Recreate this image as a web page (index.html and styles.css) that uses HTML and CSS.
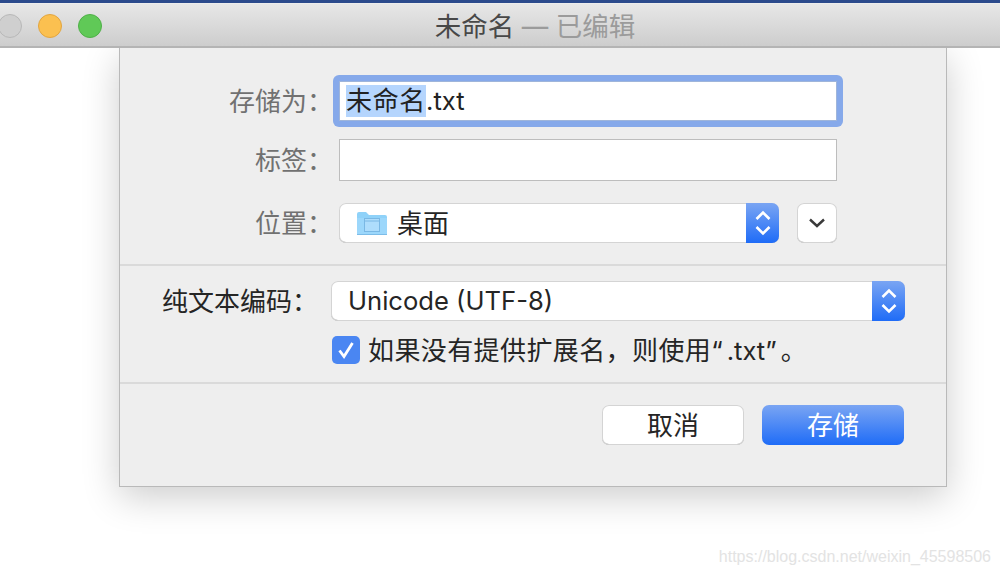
FILE: index.html
```html
<!DOCTYPE html>
<html lang="zh">
<head>
<meta charset="utf-8">
<title>未命名</title>
<link rel="stylesheet" href="styles.css">
</head>
<body>
<div class="accent"></div>
<header class="titlebar">
  <div class="lights">
    <span class="light light-gray"></span>
    <span class="light light-yellow"></span>
    <span class="light light-green"></span>
  </div>
  <div class="title">未命名 <span class="title-dim">— 已编辑</span></div>
</header>
<main class="sheet">
  <section class="top">
    <div class="row row-name">
      <label class="label">存储为：</label>
      <div class="focus"><div class="input"><span class="sel">未命名</span><span class="latin lift">.txt</span></div></div>
    </div>
    <div class="row row-tags">
      <label class="label">标签：</label>
      <div class="input input-plain"></div>
    </div>
    <div class="row row-where">
      <label class="label">位置：</label>
      <div class="select select-where">
        <svg class="folder" width="30" height="24" viewBox="0 0 30 24">
          <path d="M0 3a2 2 0 0 1 2-2h7l3 3h16a2 2 0 0 1 2 2v16a2 2 0 0 1-2 2H2a2 2 0 0 1-2-2z" fill="#8fd2f9"/>
          <path d="M0 7h30v15a2 2 0 0 1-2 2H2a2 2 0 0 1-2-2z" fill="#9cd7fb"/>
          <path d="M0 23.500h30" stroke="#7cbce8" stroke-width="1"/>
          <rect x="7.500" y="7.500" width="15" height="13" fill="#aeddfc" stroke="#7ab8e4"/>
          <path d="M8 10h14" stroke="#7ab8e4" stroke-width="1"/>
        </svg>
        <span class="select-text select-text-cjk">桌面</span>
        <span class="stepper">
          <svg width="16" height="30" viewBox="0 0 16 30"><path d="M1.500 11L8 4.500l6.500 6.500M1.500 19L8 25.500l6.500-6.500" fill="none" stroke="#fff" stroke-width="2.600"/></svg>
        </span>
      </div>
      <button class="chevron">
        <svg width="16" height="10" viewBox="0 0 16 10"><path d="M1 1.500l7 6.500 7-6.500" fill="none" stroke="#3a3a3a" stroke-width="2.400"/></svg>
      </button>
    </div>
  </section>
  <section class="middle">
    <div class="row row-enc">
      <label class="label label-enc">纯文本编码：</label>
      <div class="select select-enc">
        <span class="select-text latin lift">Unicode (UTF-8)</span>
        <span class="stepper">
          <svg width="16" height="30" viewBox="0 0 16 30"><path d="M1.500 11L8 4.500l6.500 6.500M1.500 19L8 25.500l6.500-6.500" fill="none" stroke="#fff" stroke-width="2.600"/></svg>
        </span>
      </div>
    </div>
    <div class="check-row">
      <span class="checkbox">
        <svg width="20" height="20" viewBox="0 0 20 20"><path d="M3.500 10.500l4.500 6L16.500 3" fill="none" stroke="#fff" stroke-width="2.800"/></svg>
      </span>
      <span class="check-text">如果没有提供扩展名，则使用<span class="quote">“</span><span class="latin">.txt</span><span class="quote">”</span>。</span>
    </div>
  </section>
  <section class="bottom">
    <button class="btn btn-cancel">取消</button>
    <button class="btn btn-save">存储</button>
  </section>
</main>
<div class="watermark">https://blog.csdn.net/weixin_45598506</div>
</body>
</html>
```
FILE: styles.css
```css
* { box-sizing: border-box; }
html, body { margin: 0; height: 100%; }
body {
  width: 1000px;
  height: 576px;
  overflow: hidden;
  position: relative;
  background: #fff;
  font-family: "Inter", "Noto Sans CJK SC", sans-serif;
  font-size: 26px;
  color: #252525;
}
.latin { font-size: 25.6px; letter-spacing: 0; }
.lift { padding-bottom: 2px; }
.accent { height: 3px; background: #2b4a8c; }
.titlebar {
  height: 45px;
  border-top: 1px solid #ececec;
  border-bottom: 2px solid #b4b4b4;
  background: linear-gradient(#e7e7e7, #cdcdcd);
  position: relative;
  display: flex;
  align-items: center;
  justify-content: center;
  padding-left: 70px;
  padding-top: 2px;
}
.lights { position: absolute; left: -2px; top: 10px; display: flex; gap: 16px; }
.light { width: 24px; height: 24px; border-radius: 50%; border: 1px solid; }
.light-gray { background: #cfcfcf; border-color: #b8b8b8; }
.light-yellow { background: #fbc050; border-color: #e2a540; }
.light-green { background: #60c957; border-color: #4fb048; }
.title { font-size: 26.5px; color: #484848; line-height: 42px; }
.title-dim { color: #9b9b9b; }
.sheet {
  margin-left: 119px;
  width: 828px;
  height: 439px;
  background: #eeeeee;
  border: 1px solid #b9b9b9;
  border-top: 0;
  box-shadow: 0 10px 35px rgba(0, 0, 0, 0.2);
  display: flex;
  flex-direction: column;
}
.row { display: flex; align-items: center; }
.label {
  width: 213px;
  flex: none;
  text-align: right;
  color: #717171;
  white-space: nowrap;
  padding-bottom: 3px;
}
.top { padding-top: 27px; height: 218px; border-bottom: 2px solid #dadada; }
.row-name { height: 52px; }
.focus {
  width: 510px;
  height: 52px;
  padding: 6px;
  background: #86a9ea;
  border-radius: 6px;
}
.input {
  height: 40px;
  background: #fff;
  border: 1px solid #9fb5da;
  padding-left: 6px;
  display: flex;
  align-items: center;
  color: #222;
}
.sel {
  background: #b5d5fd;
  height: 32px;
  line-height: 31px;
  letter-spacing: 0.67px;
}
.input-plain { width: 498px; height: 42px; margin-left: 6px; border: 1px solid #bdbdbd; }
.row-tags { margin-top: 12px; height: 42px; }
.row-where { margin-top: 22px; height: 40px; }
.select {
  position: relative;
  height: 40px;
  background: #fff;
  border-radius: 7px;
  box-shadow: inset 0 0 0 1px #d4d4d4, inset 0 -1px 0 #aaa;
  display: flex;
  align-items: center;
  color: #252525;
}
.select-where { width: 440px; margin-left: 6px; padding-left: 18px; }
.select-text-cjk { padding-bottom: 4px; }
.folder { flex: none; margin-right: 10px; }
.stepper {
  position: absolute;
  right: 0;
  top: 0;
  width: 33px;
  height: 40px;
  border-radius: 0 7px 7px 0;
  background: linear-gradient(#7aa5f3, #1f6cf7);
  display: flex;
  align-items: center;
  justify-content: center;
}
.chevron {
  width: 40px;
  height: 40px;
  margin-left: 18px;
  padding: 0;
  border: 0;
  border-radius: 7px;
  background: #fff;
  box-shadow: inset 0 0 0 1px #d4d4d4, inset 0 -1px 0 #aaa;
  display: flex;
  align-items: center;
  justify-content: center;
}
.middle { height: 118px; padding-top: 15px; border-bottom: 2px solid #dadada; }
.row-enc { height: 40px; }
.label-enc { width: 198px; color: #252525; padding-bottom: 4px; }
.select-enc { width: 574px; margin-left: 13px; padding-left: 17px; }
.check-row { display: flex; align-items: center; margin: 15px 0 0 212px; height: 28px; gap: 8px; }
.checkbox {
  width: 28px;
  height: 28px;
  border-radius: 5px;
  background: #4a86f2;
  display: flex;
  align-items: center;
  justify-content: center;
}
.check-text { white-space: nowrap; letter-spacing: 0.4px; padding-bottom: 4px; }
.quote { letter-spacing: 4px; }
.bottom { display: flex; padding: 21px 0 0 482px; gap: 18px; }
.btn {
  width: 142px;
  height: 40px;
  padding: 0 0 4px;
  border: 0;
  border-radius: 7px;
  font: inherit;
}
.btn-cancel { background: #fff; color: #252525; box-shadow: inset 0 0 0 1px #d4d4d4, inset 0 -1px 0 #aaa; }
.btn-save { background: linear-gradient(#7aa5f3, #1f6cf7); color: #fff; }
.watermark {
  position: absolute;
  right: 9px;
  top: 548px;
  font-family: "Liberation Sans", sans-serif;
  font-size: 16px;
  color: #e3e3e3;
}
```
